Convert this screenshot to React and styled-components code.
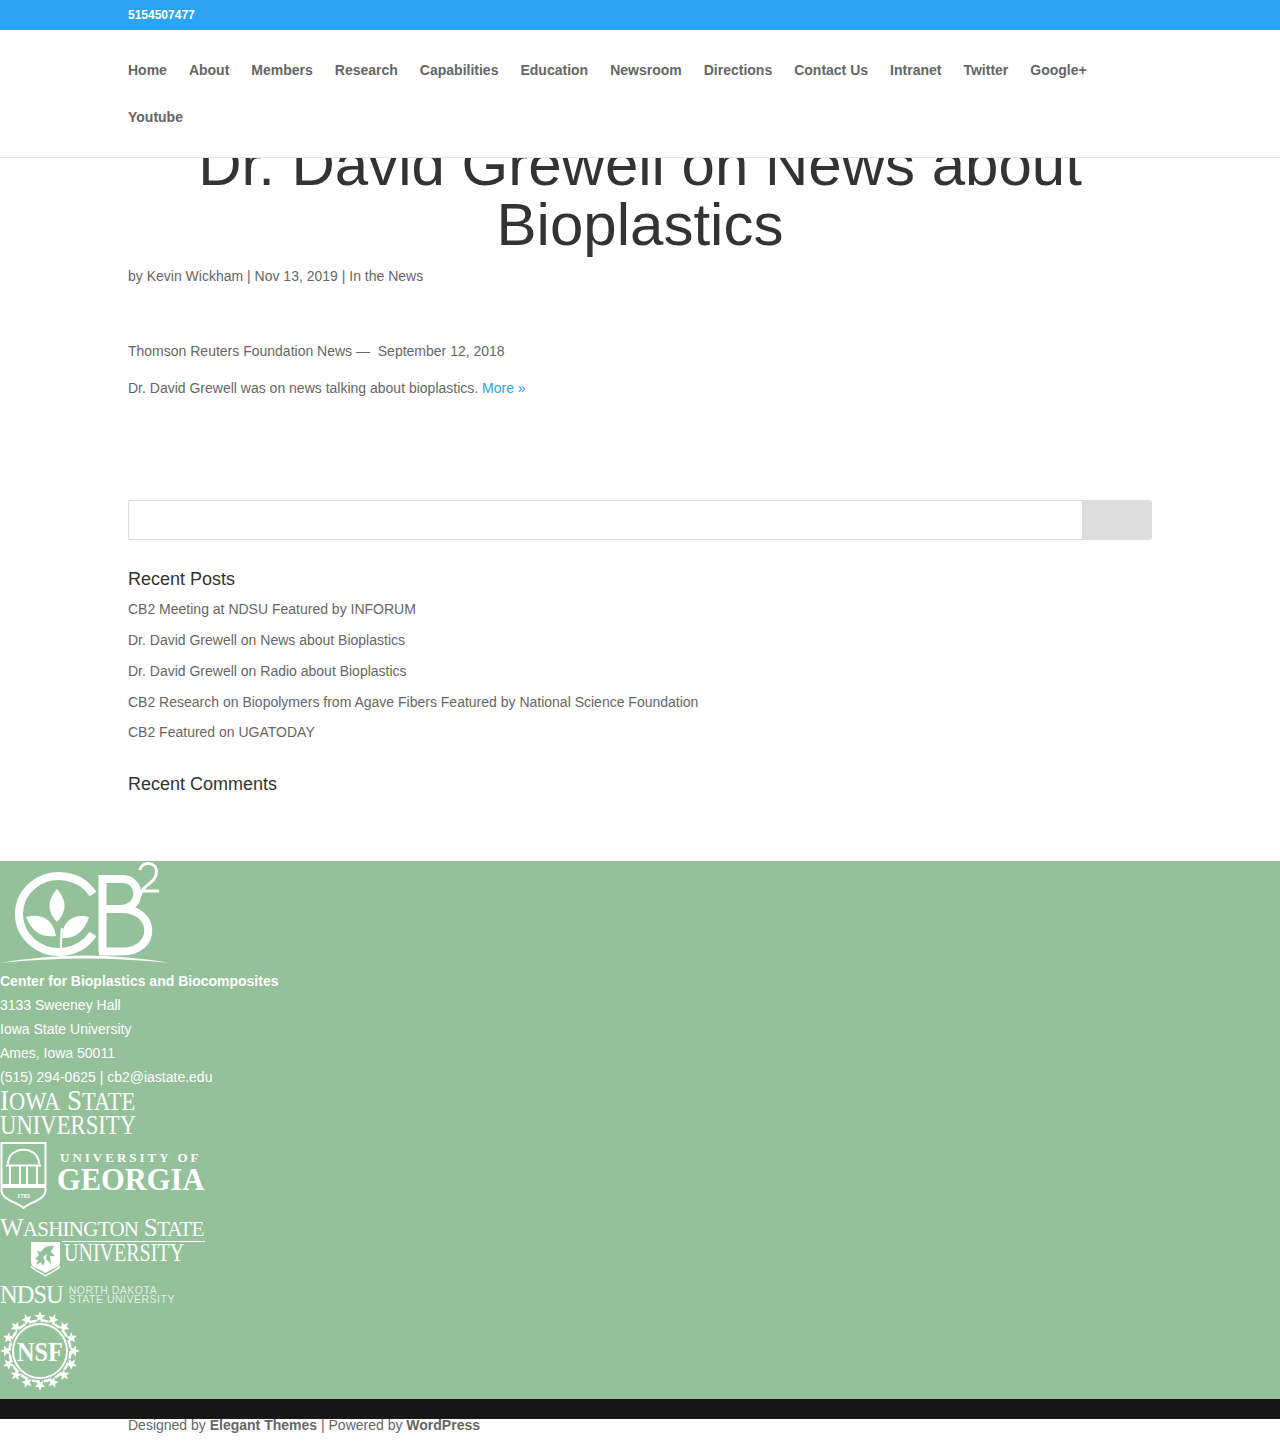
import React from "react";
import styled, { createGlobalStyle } from "styled-components";

const navItems = [
  "Home",
  "About",
  "Members",
  "Research",
  "Capabilities",
  "Education",
  "Newsroom",
  "Directions",
  "Contact Us",
  "Intranet",
  "Twitter",
  "Google+",
  "Youtube",
];

const recentPosts = [
  "CB2 Meeting at NDSU Featured by INFORUM",
  "Dr. David Grewell on News about Bioplastics",
  "Dr. David Grewell on Radio about Bioplastics",
  "CB2 Research on Biopolymers from Agave Fibers Featured by National Science Foundation",
  "CB2 Featured on UGATODAY",
];

const addressLines = [
  "3133 Sweeney Hall",
  "Iowa State University",
  "Ames, Iowa 50011",
  "(515) 294-0625 | cb2@iastate.edu",
];

const STAR = "M0,-6 L1.5,-2 L5.6,-1.9 L2.4,0.8 L3.5,4.8 L0,2.6 L-3.5,4.8 L-2.4,0.8 L-5.6,-1.9 L-1.5,-2 Z";

function CbLogo() {
  return (
    <LogoSvg width="175" height="104" viewBox="0 1 175 104">
      <path
        d="M93 34 A40 38 0 1 0 93 74"
        fill="none"
        stroke="#fff"
        strokeWidth="8"
      />
      <path d="M57 29 C48 40 46 50 57 62 C68 50 66 40 57 29Z" fill="#fff" />
      <path d="M26 57 C40 53 53 58 56 76 C42 78 32 72 26 57Z" fill="#fff" />
      <path d="M89 57 C75 53 62 60 62 78 C76 79 85 70 89 57Z" fill="#fff" />
      <path d="M62 68 C61 75 61 82 61 89" fill="none" stroke="#fff" strokeWidth="2" />
      <path
        d="M102.500 92 V19 H122 C141 19 144 46 122 49 H106 M122 49 C156 49 158 91.500 122 91.500 H99"
        fill="none"
        stroke="#fff"
        strokeWidth="8"
      />
      <path
        d="M140 10 C141 1 157 1 156.500 12 C156 22 146 24 142 31 C140 36 138 40 133 43 M141 31 H159"
        fill="none"
        stroke="#fff"
        strokeWidth="3"
      />
      <path d="M0 103 Q85 88 170 103 Q85 94 0 103Z" fill="#fff" />
    </LogoSvg>
  );
}

function GeorgiaShield() {
  return (
    <LogoSvg width="48" height="68" viewBox="0 0 48 68">
      <path
        d="M1.500 1 H45.500 V48 C45.500 58 30 60 23.500 66 C17 60 1.500 58 1.500 48Z"
        fill="none"
        stroke="#fff"
        strokeWidth="2"
      />
      <path
        d="M8 22 C8 3 39 3 39 22 M6 23.500 H41 M10 24 V42 M20 24 V42 M27 24 V42 M37 24 V42"
        fill="none"
        stroke="#fff"
        strokeWidth="2"
      />
      <path d="M2 42 H45 V46 H2Z" fill="#fff" />
      <FineText x="23.500" y="56" fontSize="6.500" textAnchor="middle" fontWeight="700">
        1785
      </FineText>
    </LogoSvg>
  );
}

function CougarShield() {
  return (
    <LogoSvg width="31" height="36" viewBox="0 0 31 36">
      <path d="M1 1 H30 V21 C30 27 21 28 15.500 32 C10 28 1 27 1 21Z" fill="#fff" />
      <path d="M1 25 C4 30 11 31 15.500 35 C20 31 27 30 30 25" fill="none" stroke="#fff" strokeWidth="1.500" />
      <path
        d="M24 5 C18 4 13 7 11 11 L7 10 L9 14 L5 18 L8 19 L6 24 L11 21 L13 25 L15 20 L13 16 L17 13 L16 18 L21 23 L20 15 L25 15 L21 11 Z"
        fill="#94c09a"
      />
    </LogoSvg>
  );
}

function NsfSeal() {
  const stars = Array.from({ length: 16 }, (_, i) => (i * 360) / 16);
  return (
    <LogoSvg width="80" height="80" viewBox="-40 -40 80 80">
      <circle r="27" fill="none" stroke="#fff" strokeWidth="2" />
      <circle r="30.500" fill="none" stroke="#fff" strokeWidth="2.500" strokeDasharray="8 4" />
      {stars.map((angle) => (
        <path key={angle} d={STAR} fill="#fff" transform={`rotate(${angle}) translate(0,-34)`} />
      ))}
      <SealText y="9.500" textAnchor="middle" textLength="46" lengthAdjust="spacingAndGlyphs">
        NSF
      </SealText>
    </LogoSvg>
  );
}

export default function App() {
  return (
    <>
      <GlobalStyle />
      <Header>
        <TopBar>
          <Phone>5154507477</Phone>
        </TopBar>
        <Nav>
          {navItems.map((item) => (
            <NavLink key={item}>{item}</NavLink>
          ))}
        </Nav>
      </Header>

      <Main>
        <Title>Dr. David Grewell on News about Bioplastics</Title>
        <Meta>by Kevin Wickham | Nov 13, 2019 | In the News</Meta>
        <Para>Thomson Reuters Foundation News — {"\u00a0"}September 12, 2018</Para>
        <Para>
          Dr. David Grewell was on news talking about bioplastics. <MoreLink>More »</MoreLink>
        </Para>

        <SearchForm>
          <SearchInput />
          <SearchButton />
        </SearchForm>

        <WidgetTitle>Recent Posts</WidgetTitle>
        <PostList>
          {recentPosts.map((post) => (
            <PostItem key={post}>{post}</PostItem>
          ))}
        </PostList>
        <WidgetTitle $comments>Recent Comments</WidgetTitle>
      </Main>

      <Footer>
        <CbLogo />
        <Address>
          <strong>Center for Bioplastics and Biocomposites</strong>
          {addressLines.map((line) => (
            <span key={line}>{line}</span>
          ))}
        </Address>

        <IowaLogo>
          <IowaTop>
            I<small>OWA</small> S<small>TATE</small>
          </IowaTop>
          <IowaBottom>UNIVERSITY</IowaBottom>
        </IowaLogo>

        <GeorgiaLogo>
          <GeorgiaShield />
          <GeorgiaName>
            <GeorgiaSmall>UNIVERSITY OF</GeorgiaSmall>
            <GeorgiaBig>GEORGIA</GeorgiaBig>
          </GeorgiaName>
        </GeorgiaLogo>

        <WsuLogo>
          <WsuTop>
            W<small>ASHINGTON</small> S<small>TATE</small>
          </WsuTop>
          <WsuBottom>
            <CougarShield />
            <WsuRule>
              <WsuUniversity>UNIVERSITY</WsuUniversity>
            </WsuRule>
          </WsuBottom>
        </WsuLogo>

        <NdsuLogo>
          <NdsuMark>NDSU</NdsuMark>
          <NdsuName>
            NORTH DAKOTA
            <br />
            STATE UNIVERSITY
          </NdsuName>
        </NdsuLogo>

        <NsfWrap>
          <NsfSeal />
        </NsfWrap>
      </Footer>

      <BottomBar />
      <Credits>
        Designed by <strong>Elegant Themes</strong> | Powered by <strong>WordPress</strong>
      </Credits>
    </>
  );
}

const GlobalStyle = createGlobalStyle`
  * {
    box-sizing: border-box;
  }
  body {
    margin: 0;
    background: #fff;
    color: #666;
    font-family: "Liberation Sans", Arial, sans-serif;
    font-size: 14px;
    line-height: 1.7;
  }
`;

const Header = styled.header`
  position: fixed;
  top: 0;
  left: 0;
  right: 0;
  z-index: 10;
  background: #fff;
  border-bottom: 1px solid #e5e5e5;
`;

const TopBar = styled.div`
  height: 30px;
  padding-left: 128px;
  background: #2ea3f2;
  color: #fff;
  display: flex;
  align-items: center;
`;

const Phone = styled.span`
  font-size: 12px;
  font-weight: 700;
`;

const Nav = styled.nav`
  width: 1024px;
  height: 127px;
  margin: 0 auto;
  padding-top: 28px;
  display: flex;
  flex-wrap: wrap;
  align-content: flex-start;
  column-gap: 22px;
  row-gap: 23px;
`;

const NavLink = styled.a`
  font-size: 14px;
  font-weight: 700;
  line-height: 24px;
  color: #666;
`;

const Main = styled.main`
  width: 1024px;
  height: 861px;
  margin: 0 auto;
  padding-top: 135px;
`;

const Title = styled.h1`
  margin: 0 0 9px;
  font-size: 60px;
  font-weight: 400;
  line-height: 60px;
  text-align: center;
  color: #333;
`;

const Meta = styled.p`
  margin: 0 0 51px;
  line-height: 24px;
`;

const Para = styled.p`
  margin: 0 0 13px;
  line-height: 24px;
`;

const MoreLink = styled.a`
  color: #2ea3f2;
`;

const SearchForm = styled.div`
  display: flex;
  height: 40px;
  margin-top: 100px;
`;

const SearchInput = styled.div`
  flex: 1;
  border: 1px solid #ddd;
  border-right: 0;
  border-radius: 3px 0 0 3px;
`;

const SearchButton = styled.div`
  width: 70px;
  background: #ddd;
  border-radius: 0 3px 3px 0;
`;

const WidgetTitle = styled.h4`
  margin: ${(p) => (p.$comments ? "18.8px" : "26px")} 0 0;
  font-size: 18px;
  font-weight: 400;
  line-height: 27px;
  color: #333;
`;

const PostList = styled.ul`
  list-style: none;
  margin: 0;
  padding: 5.2px 0 0;
`;

const PostItem = styled.li`
  line-height: 23.8px;
  padding-bottom: 7px;
`;

const Footer = styled.footer`
  height: 538px;
  background: #94c09a;
  color: #fff;
  display: flex;
  flex-direction: column;
  align-items: flex-start;
`;

const LogoSvg = styled.svg`
  display: block;
  flex: none;
`;

const FineText = styled.text`
  fill: #fff;
  font-family: "Liberation Serif", serif;
`;

const SealText = styled.text`
  fill: #fff;
  font-family: "Liberation Serif", serif;
  font-size: 28px;
  font-weight: 700;
`;

const Address = styled.div`
  display: flex;
  flex-direction: column;
  margin-top: 4px;
  line-height: 24px;

  strong {
    font-weight: 700;
  }
`;

const IowaLogo = styled.div`
  display: flex;
  flex-direction: column;
  align-items: flex-start;
  height: 50px;
  margin-top: -2px;
  font-family: "Liberation Serif", serif;
  white-space: nowrap;
`;

const IowaTop = styled.span`
  font-size: 30px;
  line-height: 25px;
  transform: scaleX(0.9);
  transform-origin: left;

  small {
    font-size: 25px;
  }
`;

const IowaBottom = styled.span`
  font-size: 27px;
  line-height: 23px;
  transform: scaleX(0.84);
  transform-origin: left;
`;

const GeorgiaLogo = styled.div`
  display: flex;
  gap: 9px;
  margin-top: 5px;
`;

const GeorgiaName = styled.div`
  display: flex;
  flex-direction: column;
  align-items: flex-start;
  font-family: "Liberation Serif", serif;
  font-weight: 700;
  white-space: nowrap;
`;

const GeorgiaSmall = styled.span`
  margin: 8px 0 0 3px;
  font-size: 13px;
  line-height: 16px;
  letter-spacing: 3px;
`;

const GeorgiaBig = styled.span`
  margin-top: 1px;
  font-size: 30.5px;
  line-height: 26px;
`;

const WsuLogo = styled.div`
  display: flex;
  flex-direction: column;
  width: 205px;
  margin-top: 6px;
  font-family: "Liberation Serif", serif;
`;

const WsuTop = styled.div`
  font-size: 25px;
  line-height: 24px;
  letter-spacing: -0.75px;
  white-space: nowrap;

  small {
    font-size: 21px;
  }
`;

const WsuBottom = styled.div`
  display: flex;
  gap: 1px;
  padding-left: 30px;
`;

const WsuRule = styled.div`
  flex: 1;
  min-width: 0;
  height: 24px;
  padding-left: 2px;
  border-top: 1px solid #fff;
`;

const WsuUniversity = styled.span`
  display: inline-block;
  font-size: 26px;
  line-height: 21px;
  transform: scaleX(0.77);
  transform-origin: left;
`;

const NdsuLogo = styled.div`
  display: flex;
  align-items: center;
  gap: 6px;
  margin-top: 6px;
`;

const NdsuMark = styled.span`
  font-family: "Liberation Serif", serif;
  font-size: 24.5px;
  line-height: 24px;
  letter-spacing: -1px;
`;

const NdsuName = styled.span`
  font-size: 10.5px;
  line-height: 9px;
  letter-spacing: 0.5px;
  opacity: 0.75;
  white-space: nowrap;
`;

const NsfWrap = styled.div`
  margin-top: 4px;
`;

const BottomBar = styled.div`
  height: 20px;
  background: #171717;
`;

const Credits = styled.div`
  padding: 0 128px 16px;
  line-height: 12px;
  height: 28px;
  strong {
    font-weight: 700;
  }
`;
